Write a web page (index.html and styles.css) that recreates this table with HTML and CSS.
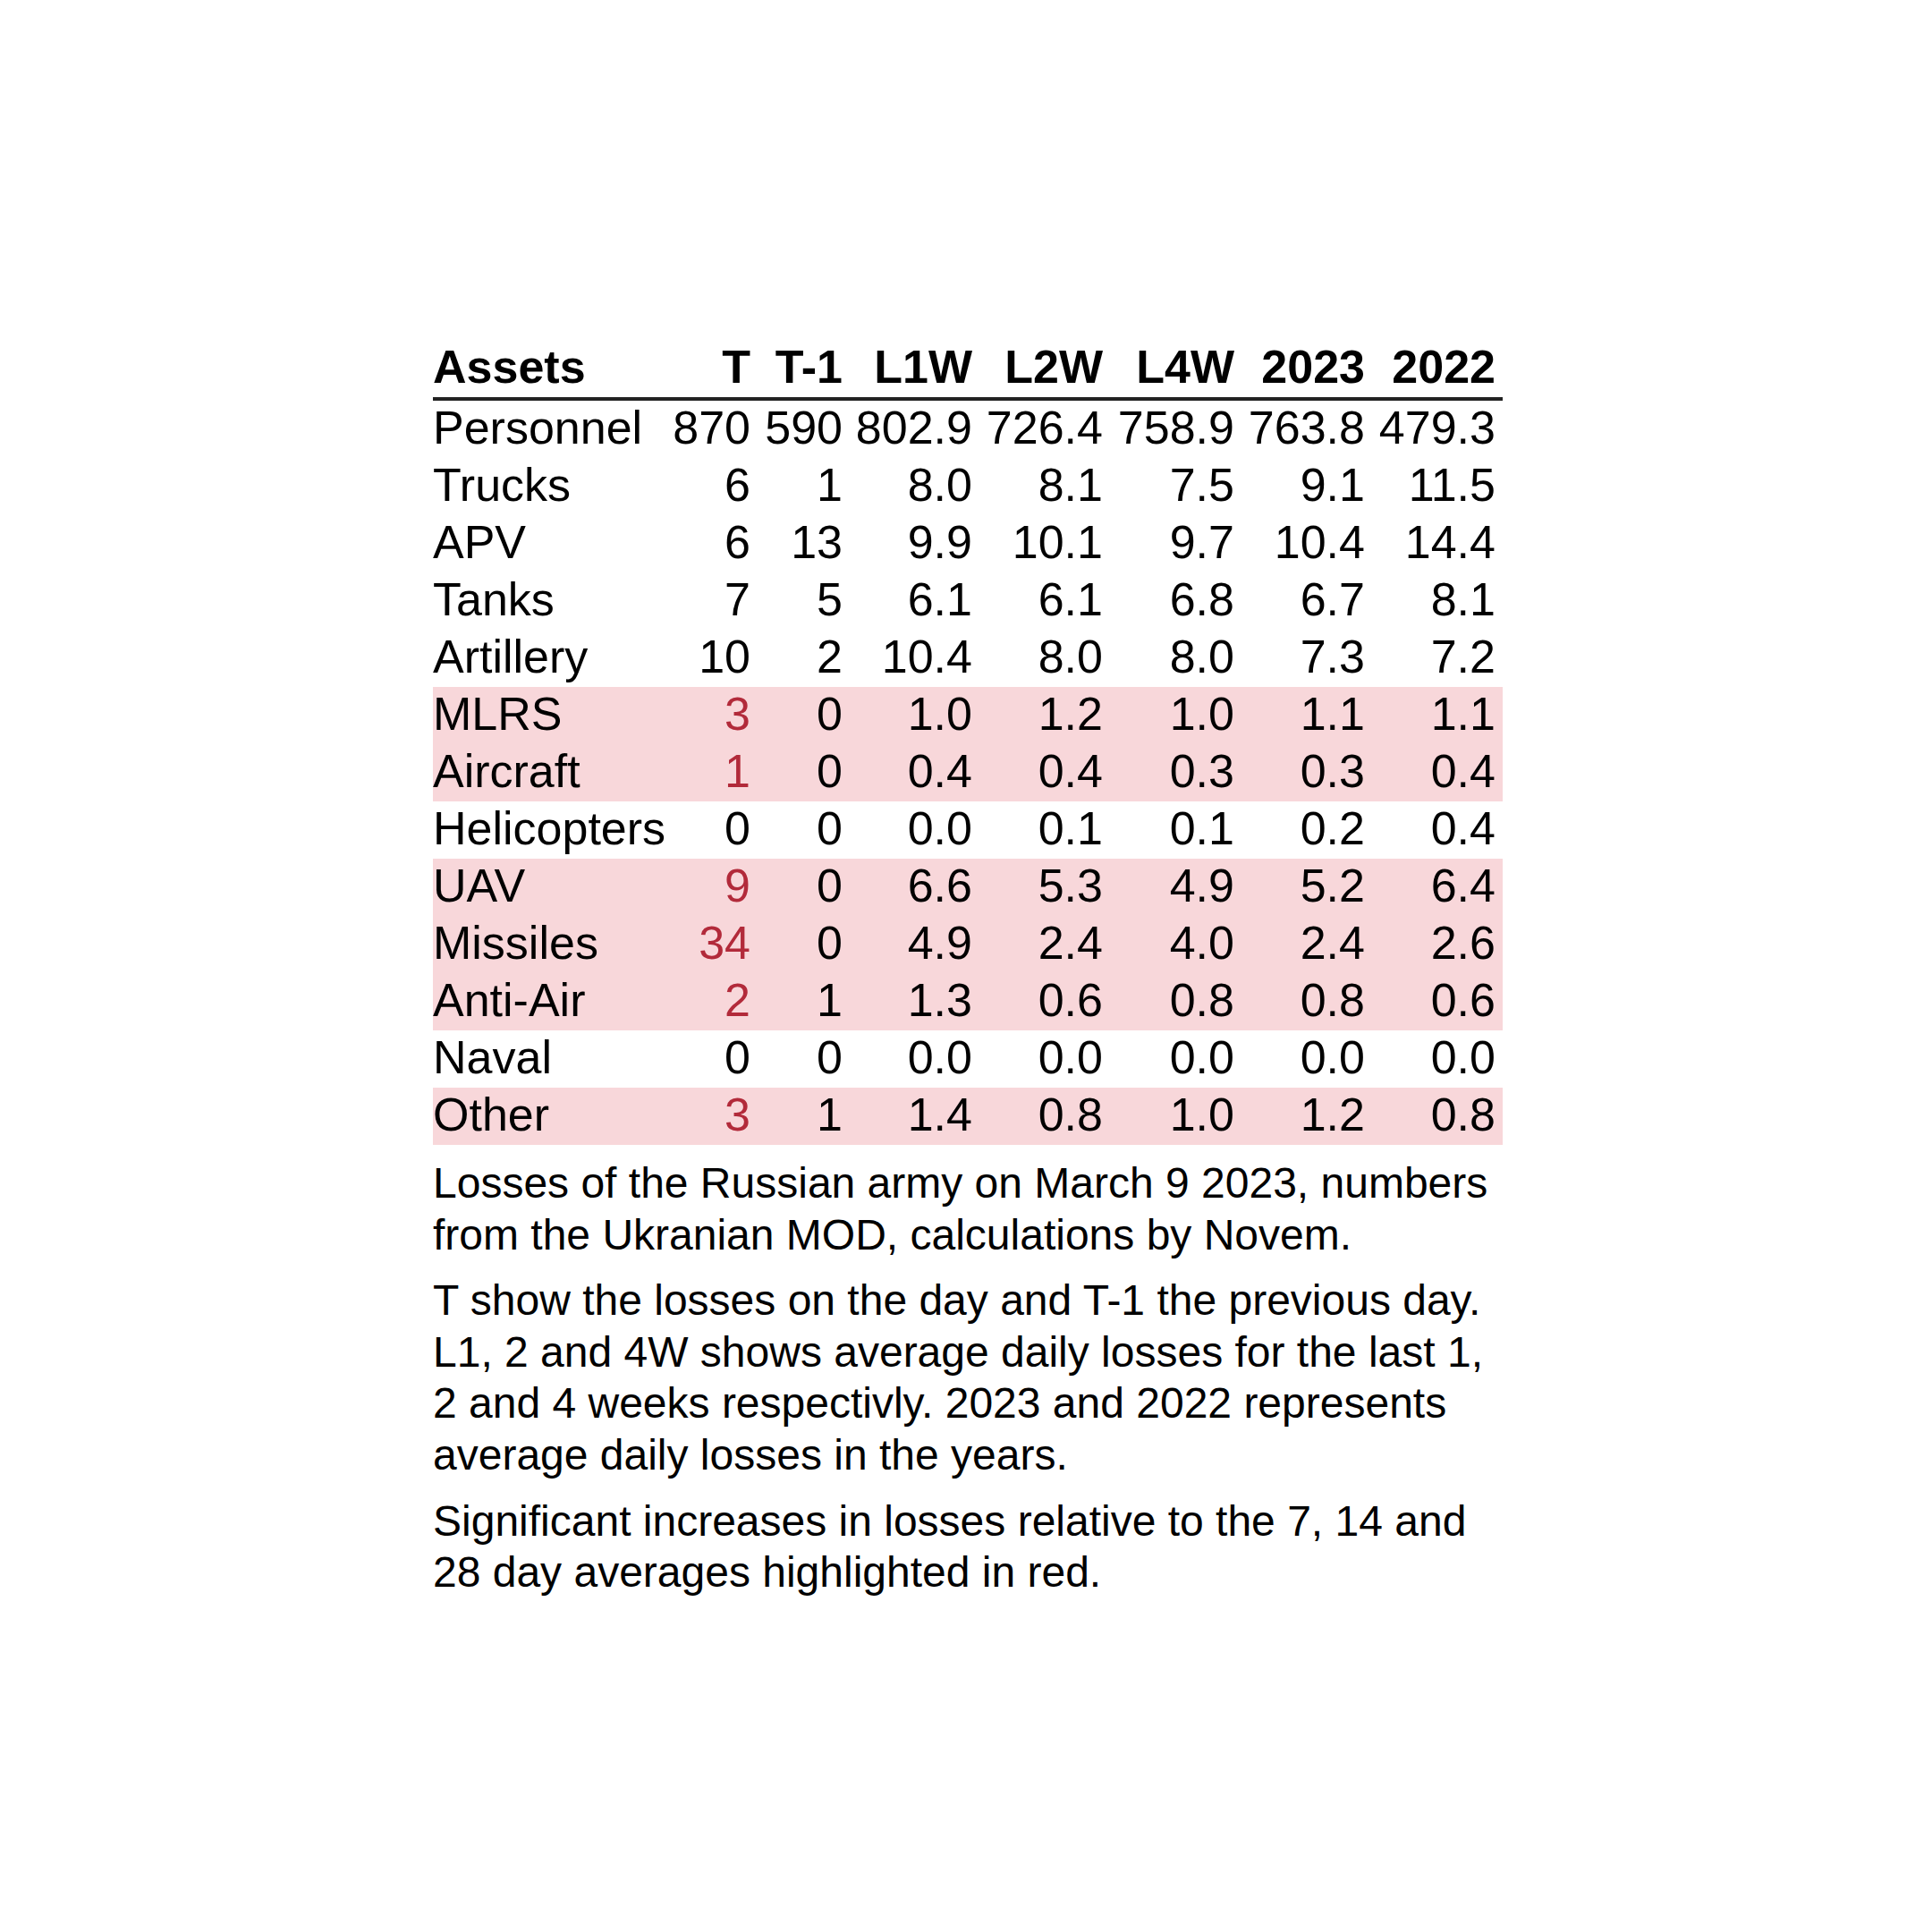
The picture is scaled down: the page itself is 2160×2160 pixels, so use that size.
FILE: index.html
```html
<!DOCTYPE html>
<html lang="en">
<head>
<meta charset="utf-8">
<title>Losses of the Russian army</title>
<link rel="stylesheet" href="styles.css">
</head>
<body>
<div class="wrap">
<table class="losses">
<colgroup>
<col class="c-asset"><col class="c-t"><col class="c-t1"><col class="c-l1"><col class="c-l2"><col class="c-l4"><col class="c-y23"><col class="c-y22">
</colgroup>
<thead>
<tr><th class="name">Assets</th><th>T</th><th>T-1</th><th>L1W</th><th>L2W</th><th>L4W</th><th>2023</th><th>2022</th></tr>
</thead>
<tbody>
<tr><td class="name">Personnel</td><td>870</td><td>590</td><td>802.9</td><td>726.4</td><td>758.9</td><td>763.8</td><td>479.3</td></tr>
<tr><td class="name">Trucks</td><td>6</td><td>1</td><td>8.0</td><td>8.1</td><td>7.5</td><td>9.1</td><td>11.5</td></tr>
<tr><td class="name">APV</td><td>6</td><td>13</td><td>9.9</td><td>10.1</td><td>9.7</td><td>10.4</td><td>14.4</td></tr>
<tr><td class="name">Tanks</td><td>7</td><td>5</td><td>6.1</td><td>6.1</td><td>6.8</td><td>6.7</td><td>8.1</td></tr>
<tr><td class="name">Artillery</td><td>10</td><td>2</td><td>10.4</td><td>8.0</td><td>8.0</td><td>7.3</td><td>7.2</td></tr>
<tr class="hl"><td class="name">MLRS</td><td class="up">3</td><td>0</td><td>1.0</td><td>1.2</td><td>1.0</td><td>1.1</td><td>1.1</td></tr>
<tr class="hl"><td class="name">Aircraft</td><td class="up">1</td><td>0</td><td>0.4</td><td>0.4</td><td>0.3</td><td>0.3</td><td>0.4</td></tr>
<tr><td class="name">Helicopters</td><td>0</td><td>0</td><td>0.0</td><td>0.1</td><td>0.1</td><td>0.2</td><td>0.4</td></tr>
<tr class="hl"><td class="name">UAV</td><td class="up">9</td><td>0</td><td>6.6</td><td>5.3</td><td>4.9</td><td>5.2</td><td>6.4</td></tr>
<tr class="hl"><td class="name">Missiles</td><td class="up">34</td><td>0</td><td>4.9</td><td>2.4</td><td>4.0</td><td>2.4</td><td>2.6</td></tr>
<tr class="hl"><td class="name">Anti-Air</td><td class="up">2</td><td>1</td><td>1.3</td><td>0.6</td><td>0.8</td><td>0.8</td><td>0.6</td></tr>
<tr><td class="name">Naval</td><td>0</td><td>0</td><td>0.0</td><td>0.0</td><td>0.0</td><td>0.0</td><td>0.0</td></tr>
<tr class="hl"><td class="name">Other</td><td class="up">3</td><td>1</td><td>1.4</td><td>0.8</td><td>1.0</td><td>1.2</td><td>0.8</td></tr>
</tbody>
</table>
<div class="notes">
<p>Losses of the Russian army on March 9 2023, numbers from the Ukranian MOD, calculations by Novem.</p>
<p>T show the losses on the day and T-1 the previous day. L1, 2 and 4W shows average daily losses for the last 1, 2 and 4 weeks respectivly. 2023 and 2022 represents average daily losses in the years.</p>
<p>Significant increases in losses relative to the 7, 14 and 28 day averages highlighted in red.</p>
</div>
</div>
</body>
</html>
```
FILE: styles.css
```css
html, body {
  margin: 0;
  padding: 0;
  background: #ffffff;
}

body {
  font-family: "Liberation Sans", Arial, sans-serif;
  color: #000000;
}

.wrap {
  padding: 380px 0 0 484px;
  width: 1196px;
}

.losses {
  border-collapse: separate;
  border-spacing: 0;
  table-layout: fixed;
  width: 1196px;
  font-size: 52px;
  line-height: 60px;
}

.c-asset { width: 260px; }
.c-t { width: 103px; }
.c-t1 { width: 103px; }
.c-l1 { width: 145px; }
.c-l2 { width: 146px; }
.c-l4 { width: 147px; }
.c-y23 { width: 146px; }
.c-y22 { width: 146px; }

.losses th,
.losses td {
  padding: 0 8px 4px 0;
  text-align: right;
  white-space: nowrap;
  overflow: visible;
}

.losses th {
  font-weight: bold;
  border-bottom: 4px solid #222222;
}

.losses .name {
  text-align: left;
  padding-right: 0;
}

.losses .hl td {
  background: #f8d7da;
}

.losses .up {
  color: #b22a3a;
}

.notes {
  margin-top: 14px;
  font-size: 48px;
  line-height: 1.2;
}

.notes p {
  margin: 0 0 16px 0;
}
```
